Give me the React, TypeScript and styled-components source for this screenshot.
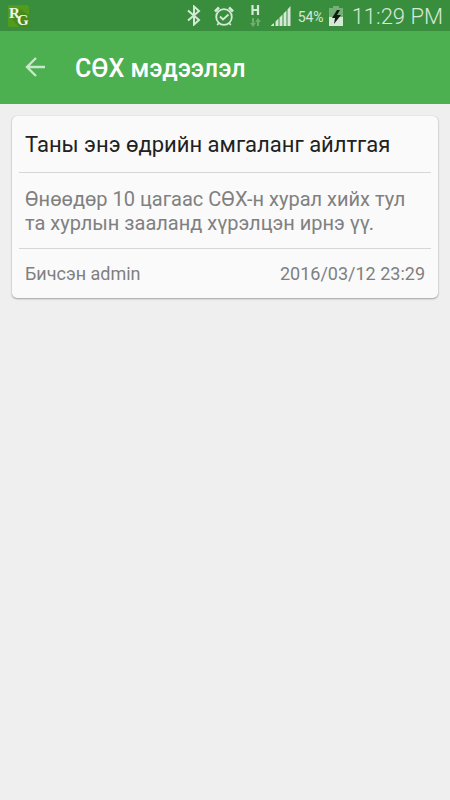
import React from "react";
import styled, { createGlobalStyle } from "styled-components";

const GlobalStyle = createGlobalStyle`
  *, *::before, *::after { box-sizing: border-box; }
  body {
    margin: 0;
    background: #efefef;
    font-family: Roboto, "Noto Sans", sans-serif;
  }
`;

const Screen = styled.div`
  display: flex;
  flex-direction: column;
  min-height: 100vh;
  background: #efefef;
`;

const StatusBar = styled.div`
  display: flex;
  align-items: center;
  height: 31px;
  padding: 0 7px 0 8px;
  background: #388e3c;
  color: #d7e8d8;
`;

const StatusIcons = styled.div`
  display: flex;
  align-items: center;
  margin-left: auto;
`;

const StatusIcon = styled.svg<{ $gap: number }>`
  display: block;
  flex: none;
  margin-right: ${(p) => p.$gap}px;
`;

const BatteryLevel = styled.span`
  margin-right: 5px;
  padding-top: 2px;
  font-size: 14px;
  line-height: 20px;
`;

const Clock = styled.time`
  padding-top: 2px;
  font-size: 22px;
  font-weight: 300;
  line-height: 28px;
  white-space: nowrap;
`;

const AppBar = styled.header`
  display: flex;
  align-items: center;
  gap: 27px;
  height: 73px;
  padding: 0 22px;
  background: #4caf50;
`;

const BackButton = styled.button`
  display: flex;
  padding: 0 0 2px;
  border: 0;
  background: none;
  color: #c9e7ca;
  cursor: pointer;
`;

const PageTitle = styled.h1`
  margin: 0;
  padding-top: 3px;
  color: #ffffff;
  font-size: 25px;
  font-weight: 500;
  line-height: 32px;
`;

const Content = styled.main`
  padding: 12px;
`;

const Card = styled.article`
  padding: 0 7px;
  border-radius: 5px;
  background: #fafafa;
  box-shadow: 0 1px 2px rgba(0, 0, 0, 0.32), 0 0 1px rgba(0, 0, 0, 0.2);
`;

const CardTitle = styled.h2`
  margin: 0;
  padding: 15px 6px 13px;
  color: #212121;
  font-size: 22px;
  font-weight: 400;
  line-height: 28px;
`;

const CardBody = styled.p`
  margin: 0;
  padding: 14px 6px 13px;
  border-top: 1px solid #d6d6d6;
  border-bottom: 1px solid #d6d6d6;
  color: #808080;
  font-size: 20px;
  line-height: 24px;
`;

const CardFooter = styled.footer`
  display: flex;
  justify-content: space-between;
  padding: 13px 6px 12px;
  color: #808080;
  font-size: 18px;
  line-height: 24px;
`;

const AppBadge = () => (
  <svg width="21" height="22" viewBox="0 0 21 22" role="img" aria-label="RG">
    <rect width="21" height="22" rx="2" fill="#539b1e" />
    <path d="M3 13 11 22H19q2 0 2-2V10L12 4z" fill="#468a1c" />
    <text x="1" y="13" fill="#f0f6ea" fontFamily="Liberation Serif, serif" fontSize="15" fontWeight="700">
      R<tspan x="9" y="20">G</tspan>
    </text>
  </svg>
);

const Bluetooth = () => (
  <StatusIcon $gap={13} width="14" height="21" viewBox="0 0 14 21" aria-hidden="true">
    <path d="M1 5.5 12 15 7 19.5V1.5L12 6 1 15.5" fill="none" stroke="currentColor" strokeWidth="2" />
  </StatusIcon>
);

const Alarm = () => (
  <StatusIcon $gap={16} width="20" height="20" viewBox="0 0 20 20" aria-hidden="true">
    <g fill="none" stroke="currentColor">
      <circle cx="10" cy="11" r="7.8" strokeWidth="1.8" />
      <path d="M6 10.5 9 13.5 14.5 8.5" strokeWidth="1.8" />
      <path d="M1 5.5 5 1.5M19 5.5 15 1.5" strokeWidth="2.6" />
      <path d="M5 17 3.2 19M15 17 16.8 19" strokeWidth="1.8" />
    </g>
  </StatusIcon>
);

const DataLink = () => (
  <StatusIcon $gap={9} width="12" height="22" viewBox="0 0 12 22" aria-hidden="true">
    <path d="M2.5 0V10M8 0V10M2.5 5H8" fill="none" stroke="currentColor" strokeWidth="2.2" />
    <path d="M2 13H4V18H6L3 22 0 18H2zM7 21V17H5L8 13 11 17H9V21z" fill="#71ae74" />
  </StatusIcon>
);

const Signal = () => (
  <StatusIcon $gap={7} width="20" height="20" viewBox="0 0 20 20" aria-hidden="true">
    <path
      d="M0 19.5 3 17V20H0zM4.5 15.5 7.5 12.5V20H4.5zM8.5 11.5 11.5 8.5V20H8.5zM12.5 7.5 15.5 4.5V20H12.5zM16.5 3.5 19.5 0V20H16.5z"
      fill="currentColor"
    />
  </StatusIcon>
);

const Battery = () => (
  <StatusIcon $gap={9} width="14" height="20" viewBox="0 0 14 20" aria-hidden="true">
    <path d="M4 0H10V2H14V11H0V2H4z" fill="#75b078" />
    <path d="M0 11H14V20H0z" fill="currentColor" />
    <path d="M8 4 3 12H6L5 18 12 9H8L11 4z" fill="#101c11" />
  </StatusIcon>
);

const BackArrow = () => (
  <svg width="26" height="26" viewBox="0 0 26 26" aria-hidden="true">
    <path d="M23 13H5M14 4 5 13 14 22" fill="none" stroke="currentColor" strokeWidth="2.4" />
  </svg>
);

export default function App() {
  return (
    <Screen>
      <GlobalStyle />
      <StatusBar>
        <AppBadge />
        <StatusIcons>
          <Bluetooth />
          <Alarm />
          <DataLink />
          <Signal />
          <BatteryLevel>54%</BatteryLevel>
          <Battery />
          <Clock>11:29 PM</Clock>
        </StatusIcons>
      </StatusBar>
      <AppBar>
        <BackButton type="button" aria-label="Буцах">
          <BackArrow />
        </BackButton>
        <PageTitle>СӨХ мэдээлэл</PageTitle>
      </AppBar>
      <Content>
        <Card>
          <CardTitle>Таны энэ өдрийн амгаланг айлтгая</CardTitle>
          <CardBody>
            Өнөөдөр 10 цагаас СӨХ-н хурал хийх тул та хурлын зааланд хүрэлцэн ирнэ үү.
          </CardBody>
          <CardFooter>
            <span>Бичсэн admin</span>
            <time dateTime="2016-03-12T23:29">2016/03/12 23:29</time>
          </CardFooter>
        </Card>
      </Content>
    </Screen>
  );
}
